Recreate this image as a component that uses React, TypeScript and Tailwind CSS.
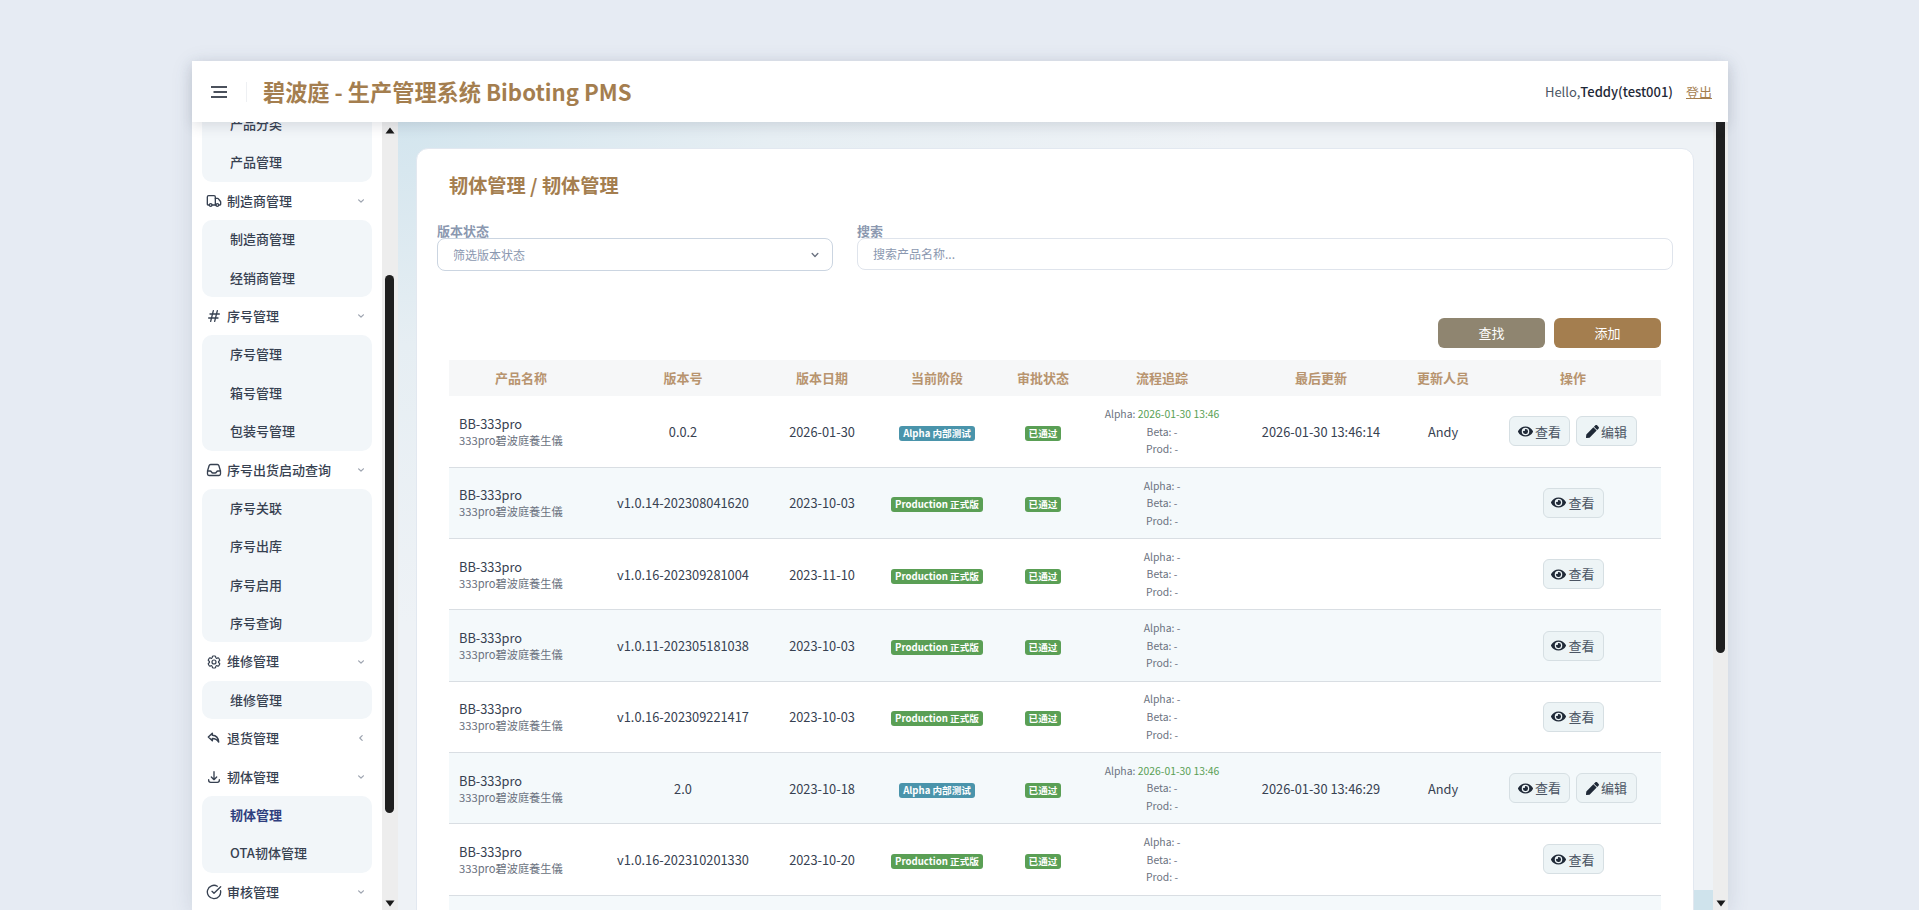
import React from "react";
import { FaEye, FaPen } from "react-icons/fa";
import { HiOutlineHashtag, HiOutlineDownload, HiChevronDown, HiChevronLeft } from "react-icons/hi";
import { HiOutlineInbox, HiOutlineCog6Tooth } from "react-icons/hi2";
import { Truck, CircleCheckBig } from "lucide-react";

type Group = { icon?: React.ReactNode; label: string; open?: boolean; items: string[] };

const iconCls = "w-[16px] h-[16px] shrink-0 text-[#374151]";
const groups: Group[] = [
  { icon: <Truck className={iconCls} strokeWidth={2} />, label: "制造商管理", open: true, items: ["制造商管理", "经销商管理"] },
  { icon: <HiOutlineHashtag className={iconCls} />, label: "序号管理", open: true, items: ["序号管理", "箱号管理", "包装号管理"] },
  { icon: <HiOutlineInbox className={iconCls} strokeWidth={2} />, label: "序号出货启动查询", open: true, items: ["序号关联", "序号出库", "序号启用", "序号查询"] },
  { icon: <HiOutlineCog6Tooth className={iconCls} strokeWidth={1.8} />, label: "维修管理", open: true, items: ["维修管理"] },
  {
    icon: (
      <svg viewBox="0 0 24 24" className={iconCls} fill="none" stroke="currentColor" strokeWidth="2.2" strokeLinejoin="round" strokeLinecap="round">
        <path d="M9.5 5 3.5 10.5l6 5.5v-3.4c4.2 0 7 1.4 9.500 5.400-.4-5.400-3.500-9.700-9.500-10z" />
      </svg>
    ),
    label: "退货管理",
    items: [],
  },
  { icon: <HiOutlineDownload className={iconCls} />, label: "韧体管理", open: true, items: ["韧体管理", "OTA韧体管理"] },
  { icon: <CircleCheckBig className={iconCls} strokeWidth={2} />, label: "审核管理", open: true, items: [] },
];

type Row = { ver: string; date: string; alpha?: string; updated?: string; user?: string };
const rows: Row[] = [
  { ver: "0.0.2", date: "2026-01-30", alpha: "2026-01-30 13:46", updated: "2026-01-30 13:46:14", user: "Andy" },
  { ver: "v1.0.14-202308041620", date: "2023-10-03" },
  { ver: "v1.0.16-202309281004", date: "2023-11-10" },
  { ver: "v1.0.11-202305181038", date: "2023-10-03" },
  { ver: "v1.0.16-202309221417", date: "2023-10-03" },
  { ver: "2.0", date: "2023-10-18", alpha: "2026-01-30 13:46", updated: "2026-01-30 13:46:29", user: "Andy" },
  { ver: "v1.0.16-202310201330", date: "2023-10-20" },
];

const heads = ["产品名称", "版本号", "版本日期", "当前阶段", "审批状态", "流程追踪", "最后更新", "更新人员", "操作"];

function Arrow({ down }: { down?: boolean }) {
  return (
    <svg viewBox="0 0 10 7" className="w-[10px] h-[7px] shrink-0" fill="#1a1a1a">
      {down ? <path d="M0.5 0.5h9L5 6.500z" /> : <path d="M5 0.500l4.500 6h-9z" />}
    </svg>
  );
}

function ActionButton({ kind }: { kind: "view" | "edit" }) {
  return (
    <button className="inline-flex items-center justify-center gap-[2px] h-[30px] w-[61px] rounded-[6px] border border-[#d6dfe3] bg-[#edf4f6] text-[13px] text-[#4b5563]">
      {kind === "view" ? <FaEye className="w-[15px] h-[15px] text-[#1f2937]" /> : <FaPen className="w-[13px] h-[13px] text-[#1f2937]" />}
      {kind === "view" ? "查看" : "编辑"}
    </button>
  );
}

function Sidebar() {
  return (
    <div className="w-[190px] shrink-0 bg-white overflow-hidden">
      <div className="-mt-[17px] px-[10px] text-[13px] font-medium text-[#374151] leading-[38.4px]">
        <div className="rounded-b-[10px] bg-[#f2f6f9] pl-[28px]">
          <div className="h-[38.4px]">产品分类</div>
          <div className="h-[38.4px]">产品管理</div>
        </div>
        {groups.map((g) => (
          <div key={g.label}>
            <div className="h-[38.4px] flex items-center pl-[4px] pr-[5px]">
              {g.icon}
              <span className="ml-[5px] flex-1">{g.label}</span>
              {g.open ? <HiChevronDown className="w-[12px] h-[12px] text-[#9ca3af]" /> : <HiChevronLeft className="w-[12px] h-[12px] text-[#9ca3af]" />}
            </div>
            {g.items.length > 0 && (
              <div className="rounded-[10px] bg-[#f2f6f9] pl-[28px]">
                {g.items.map((it, i) => (
                  <div key={i} className={g.label === "韧体管理" && i === 0 ? "h-[38.4px] text-[#2f3e7e] font-semibold" : "h-[38.4px]"}>
                    {it}
                  </div>
                ))}
              </div>
            )}
          </div>
        ))}
      </div>
    </div>
  );
}

function LeftScrollbar() {
  return (
    <div className="w-[16px] shrink-0 bg-[#ededed] flex flex-col items-center pr-[1px] pt-[5px] pb-[3px]">
      <Arrow />
      <div className="w-[9px] h-[538px] rounded-full bg-[#1f1f1f] mt-[141px]" />
      <div className="flex-1" />
      <Arrow down />
    </div>
  );
}

function RightScrollbar() {
  return (
    <div className="w-[15px] shrink-0 bg-[#ededed] flex flex-col items-center pb-[3px]">
      <div className="w-[9px] h-[531px] rounded-b-full bg-[#1f1f1f]" />
      <div className="flex-1" />
      <Arrow down />
    </div>
  );
}

const badge = "inline-block rounded-[3px] px-[4px] text-[9.6px] leading-[15px] font-bold text-white align-middle";

function Table() {
  return (
    <table className="table-fixed w-[1212px] ml-[32px] border-collapse text-[12.8px] text-[#374151]">
      <colgroup>
        <col className="w-[144px]" />
        <col className="w-[180px]" />
        <col className="w-[98px]" />
        <col className="w-[132px]" />
        <col className="w-[80px]" />
        <col className="w-[158px]" />
        <col className="w-[160px]" />
        <col className="w-[84px]" />
        <col className="w-[176px]" />
      </colgroup>
      <thead>
        <tr className="h-[36px] bg-[#f6f7f8]">
          {heads.map((h) => (
            <th key={h} className="font-bold text-[13px] text-[#b8946f] text-center p-0">{h}</th>
          ))}
        </tr>
      </thead>
      <tbody>
        {rows.map((r, i) => (
          <tr key={i} className={i % 2 === 1 ? "h-[71.3px] bg-[#f4f9fb] border-b border-[#d9dee3]" : "h-[71.3px] bg-white border-b border-[#d9dee3]"}>
            <td className="pl-[10px] p-0">
              <div className="text-[12.8px] leading-[17px] text-[#374151]">BB-333pro</div>
              <div className="text-[11.2px] leading-[16px] text-[#6b7280]">333pro碧波庭養生儀</div>
            </td>
            <td className="text-center p-0">{r.ver}</td>
            <td className="text-center p-0">{r.date}</td>
            <td className="text-center p-0">
              {r.alpha ? (
                <span className={`${badge} bg-[#4a94ab]`}>Alpha 内部测试</span>
              ) : (
                <span className={`${badge} bg-[#5a9f55]`}>Production 正式版</span>
              )}
            </td>
            <td className="text-center p-0">
              <span className={`${badge} bg-[#5a9f55]`}>已通过</span>
            </td>
            <td className="text-center p-0 text-[10.4px] leading-[17.6px] text-[#6b7280]">
              <div>Alpha: {r.alpha ? <span className="text-[#5a9f55]">{r.alpha}</span> : "-"}</div>
              <div>Beta: -</div>
              <div>Prod: -</div>
            </td>
            <td className="text-center p-0">{r.updated}</td>
            <td className="text-center p-0">{r.user}</td>
            <td className="text-center p-0">
              <div className="flex justify-center gap-[6px]">
                <ActionButton kind="view" />
                {r.alpha && <ActionButton kind="edit" />}
              </div>
            </td>
          </tr>
        ))}
        <tr className="h-[71.3px] bg-[#f4f9fb]"><td colSpan={9} /></tr>
      </tbody>
    </table>
  );
}

export default function App() {
  return (
    <div className="h-[910px] w-full overflow-hidden bg-[#e6ebf3] pt-[61px] font-['Noto_Sans_CJK_SC',sans-serif]">
      <div className="ml-[192px] w-[1536px] h-[849px] flex flex-col shadow-[0_4px_20px_rgba(60,80,110,0.15)]">
        <header className="relative z-10 h-[61px] shrink-0 bg-white shadow-[0_4px_12px_rgba(60,70,90,0.15)] flex items-center">
          <svg viewBox="0 0 18 12" className="ml-[18px] w-[18px] h-[12px]" fill="none" stroke="#111827" strokeWidth="1.5">
            <path d="M1 1h16M3.500 6h13.500M1 11h16" />
          </svg>
          <div className="ml-[18px] h-[20px] w-px bg-[#eef0f3]" />
          <div className="ml-[16px] flex-1 text-[22.2px] font-semibold text-[#a47e4f]">碧波庭 - 生产管理系统 Biboting PMS</div>
          <div className="text-[13px] text-[#4b5563]">Hello,<span className="font-medium text-[#1f2937]">Teddy(test001)</span></div>
          <a className="ml-[13px] mr-[16px] text-[13px] text-[#a47e4f] underline">登出</a>
        </header>
        <div className="flex flex-1 min-h-0">
          <Sidebar />
          <LeftScrollbar />
          <main className="flex-1 min-w-0 overflow-hidden pl-[18px] pt-[26px] bg-[linear-gradient(#cfe3ec,#cfe3ec),radial-gradient(ellipse_at_0%_0%,#d3e5ee_0%,#e6eef3_20%,#eef2f6_45%)] bg-no-repeat bg-[position:right_bottom,0_0] bg-[size:20px_20px,100%_100%]">
            <div className="w-[1278px] h-[900px] rounded-[12px] border border-[#e2e8f0] bg-white">
              <h2 className="pl-[32px] pt-[23px] text-[19.2px] leading-[27px] font-bold text-[#a47e4f]">韧体管理 / 韧体管理</h2>
              <div className="flex gap-[24px] pl-[20px] pr-[20px] mt-[24px]">
                <div className="w-[396px]">
                  <label className="block text-[13px] leading-[15px] font-semibold text-[#8b98b0]">版本状态</label>
                  <div className="h-[33px] rounded-[8px] border border-[#cbd5e1] flex items-center justify-between pl-[15px] pr-[10px] text-[12px] text-[#8b98b0]">
                    筛选版本状态
                    <HiChevronDown className="w-[14px] h-[14px] text-[#6b7280]" />
                  </div>
                </div>
                <div className="flex-1">
                  <label className="block text-[13px] leading-[15px] font-semibold text-[#8b98b0]">搜索</label>
                  <div className="h-[32px] rounded-[8px] border border-[#dfe4ec] flex items-center pl-[15px] text-[12px] text-[#8b98b0]">搜索产品名称...</div>
                </div>
              </div>
              <div className="flex justify-end gap-[9px] pr-[32px] mt-[47px]">
                <button className="w-[107px] h-[30px] rounded-[6px] bg-[#8f8570] text-[13px] text-white">查找</button>
                <button className="w-[107px] h-[30px] rounded-[6px] bg-[#a47e4f] text-[13px] text-white">添加</button>
              </div>
              <div className="mt-[12px]"><Table /></div>
            </div>
          </main>
          <RightScrollbar />
        </div>
      </div>
    </div>
  );
}
